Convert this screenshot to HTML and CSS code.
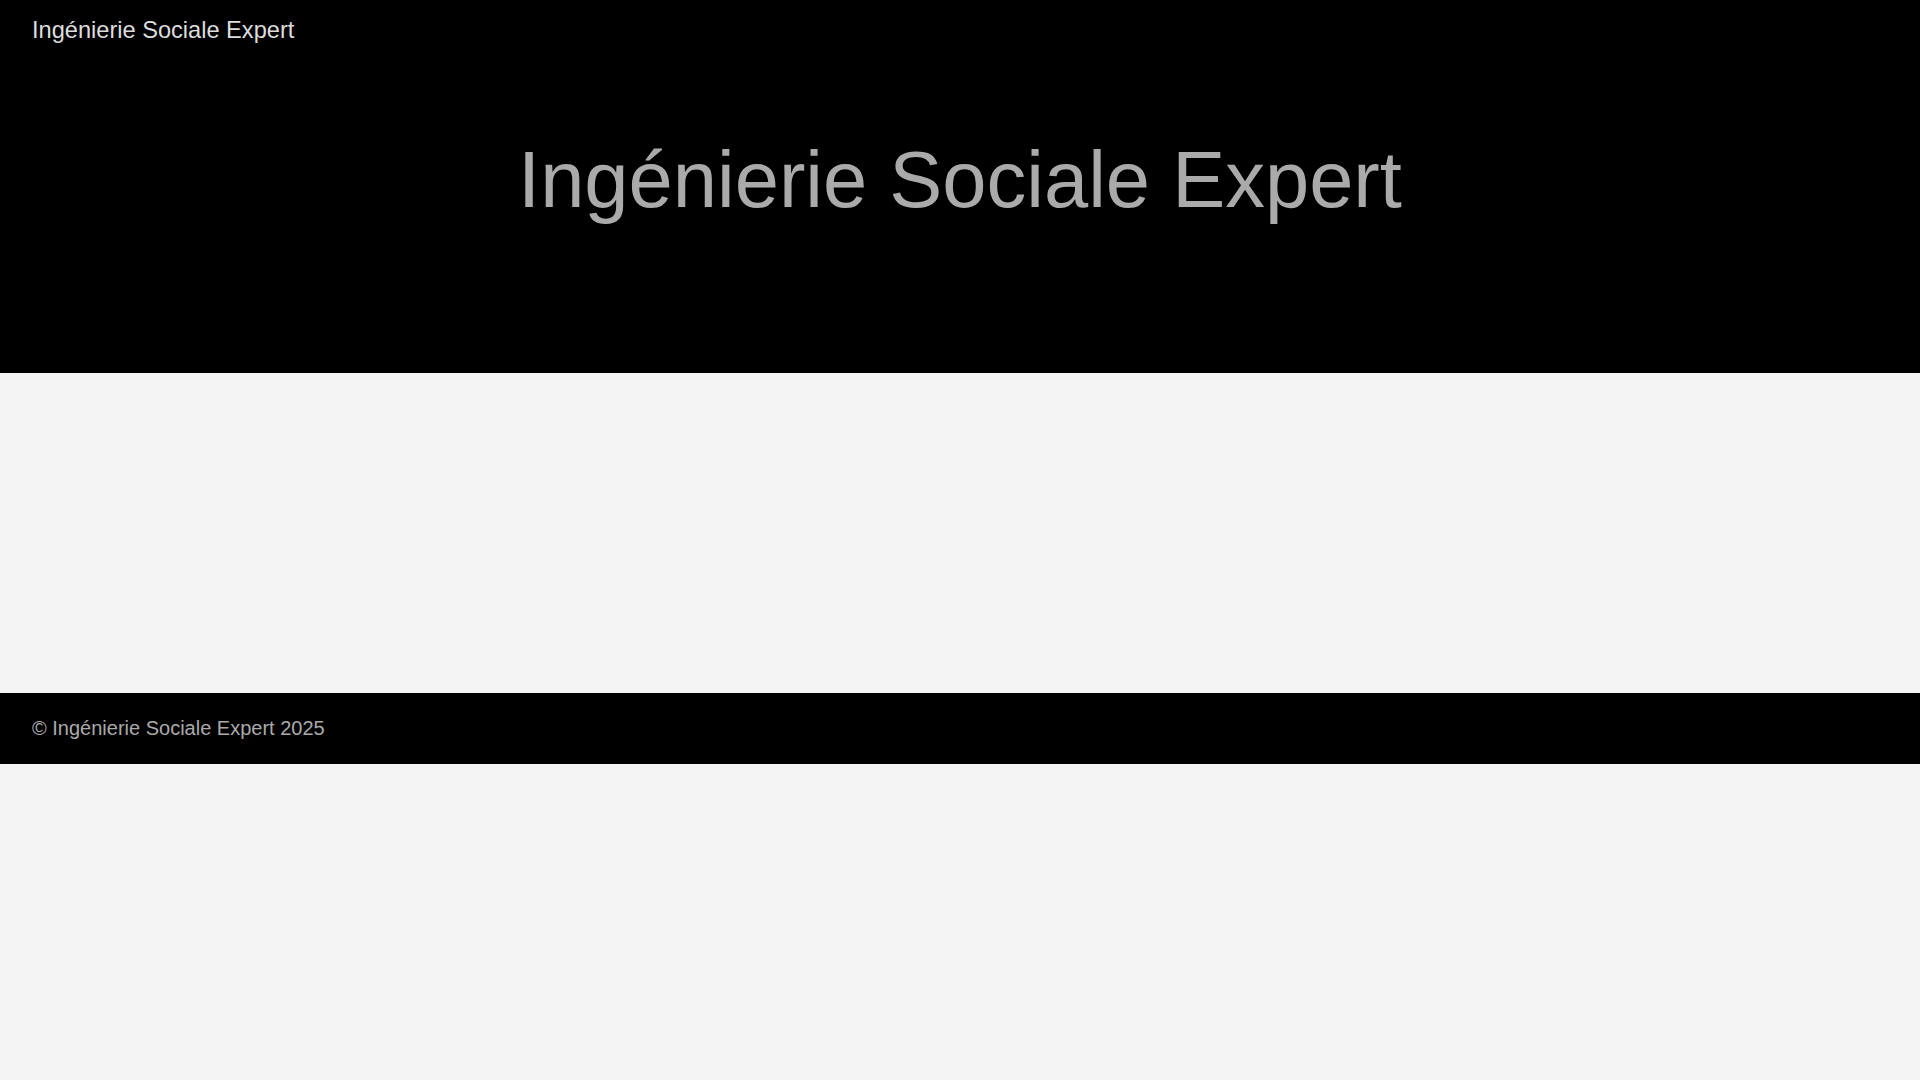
FILE: index.html
```html
<!DOCTYPE html>
<html lang="fr">
<head>
<meta charset="utf-8">
<title>Ingénierie Sociale Expert</title>
<link rel="stylesheet" href="styles.css">
</head>
<body>
<header class="site-header">
  <div class="brand">Ingénierie Sociale Expert</div>
</header>
<section class="hero">
  <h1 class="hero-title">Ingénierie Sociale Expert</h1>
</section>
<main class="content"></main>
<footer class="site-footer">
  <p class="copy">© Ingénierie Sociale Expert 2025</p>
</footer>
</body>
</html>
```
FILE: styles.css
```css
html, body {
  margin: 0;
  padding: 0;
  background: #f4f4f4;
  font-family: "Liberation Sans", Arial, sans-serif;
}
.site-header {
  background: #000;
  padding: 16px 32px;
}
.brand {
  color: #dddddd;
  font-size: 23.6px;
  line-height: 28px;
}
.hero {
  background: #000;
  padding: 74px 20px 147px;
  text-align: center;
}
.hero-title {
  margin: 0;
  font-size: 79.5px;
  font-weight: normal;
  line-height: 92px;
  color: #aaaaaa;
}
.content {
  display: block;
  height: 320px;
}
.site-footer {
  background: #000;
  padding: 24px 32px;
}
.copy {
  margin: 0;
  font-size: 20px;
  line-height: 23px;
  color: #aaaaaa;
}
```
